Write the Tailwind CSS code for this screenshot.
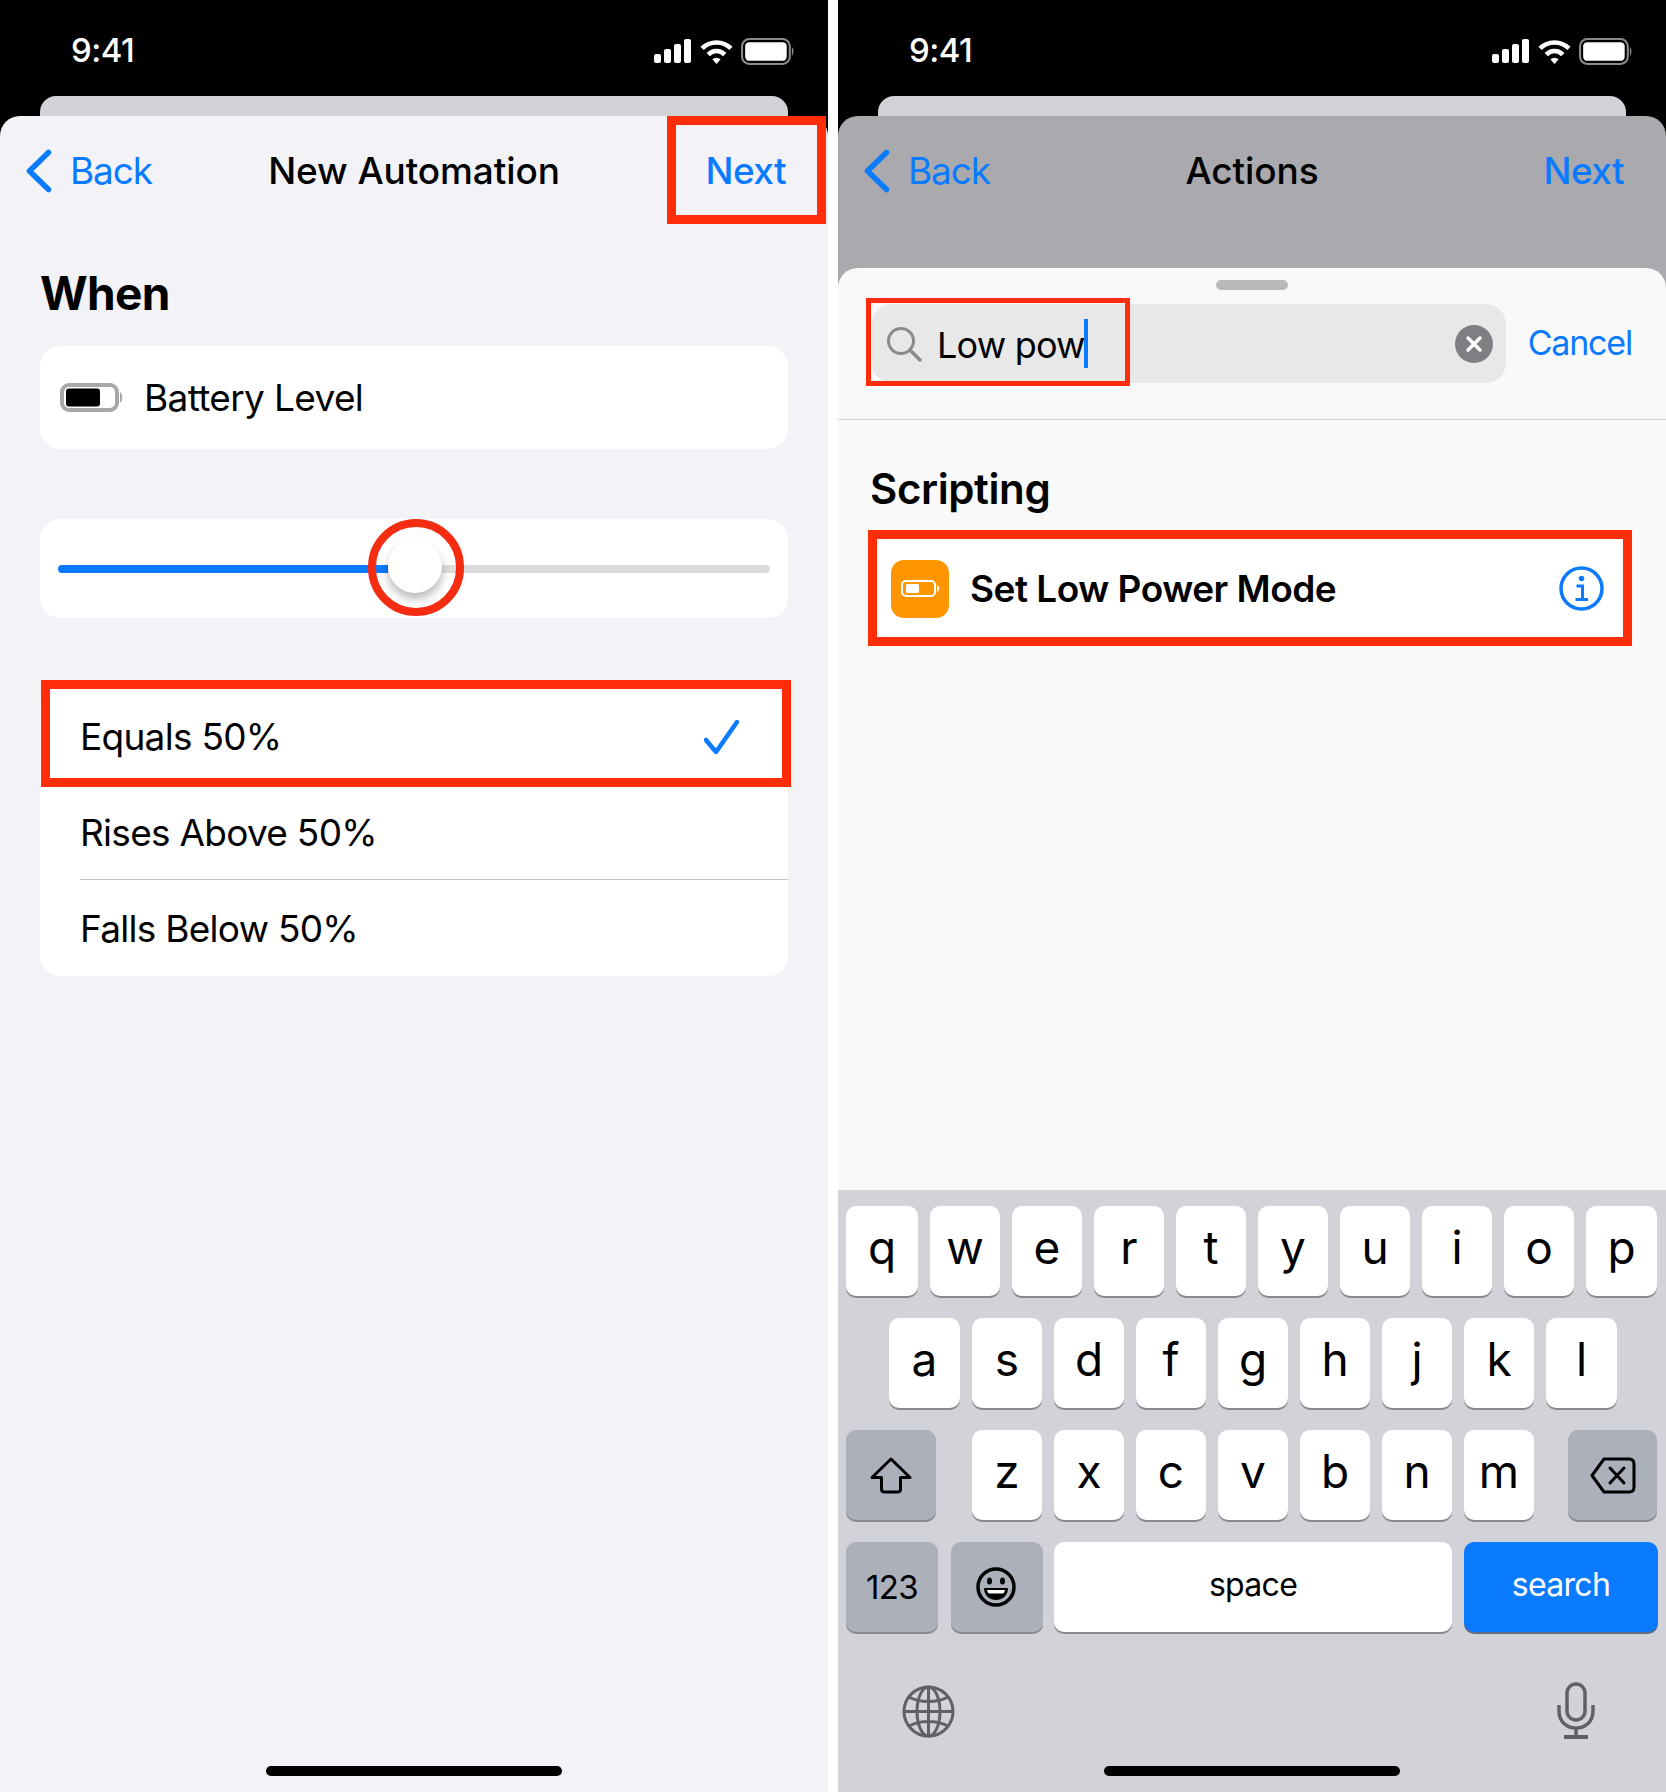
<!DOCTYPE html>
<html lang="en">
<head>
    <meta charset="UTF-8">
    <title>New Automation / Actions</title>
    <script src="https://cdn.jsdelivr.net/npm/@tailwindcss/browser@4"></script>
</head>
<body class="bg-white font-[Inter,sans-serif] text-black">

<!-- shared status bar icons -->
<svg class="hidden">
    <symbol id="signal" viewBox="0 0 38 24">
        <rect x="0" y="15" width="7" height="9" rx="2" fill="#fff"/>
        <rect x="10" y="10" width="7" height="14" rx="2" fill="#fff"/>
        <rect x="20" y="5" width="7" height="19" rx="2" fill="#fff"/>
        <rect x="30" y="0" width="7" height="24" rx="2" fill="#fff"/>
    </symbol>
    <symbol id="wifi" viewBox="0 0 32 24">
        <path d="M2 9 A20 20 0 0 1 30 9" fill="none" stroke="#fff" stroke-width="4.5"/>
        <path d="M8 15 A11 11 0 0 1 24 15" fill="none" stroke="#fff" stroke-width="4.5"/>
        <path d="M12 19.5 A6 6 0 0 1 20 19.5 L16 24 Z" fill="#fff"/>
    </symbol>
    <symbol id="battery" viewBox="0 0 52 26">
        <rect x="1" y="1" width="46" height="24" rx="7" fill="none" stroke="#8a8a8a" stroke-width="2"/>
        <rect x="4" y="4" width="40" height="18" rx="4" fill="#fff"/>
        <path d="M49 9 C51 10 51 16 49 17 Z" fill="#8a8a8a"/>
    </symbol>
    <symbol id="chevron" viewBox="0 0 26 44">
        <path d="M22.5 3.5 L3.5 22 L22.5 40.5" fill="none" stroke="#0a7aff" stroke-width="5.5" stroke-linecap="round" stroke-linejoin="round"/>
    </symbol>
</svg>

<div class="flex gap-[10px] h-[1792px] w-[1666px] overflow-hidden">

    <!-- left phone -->
    <section class="relative w-[828px] flex flex-col bg-black">
        <div class="h-[96px] flex items-center justify-between pl-[71px] pr-[33px] pt-[6px]">
            <span class="text-[33px] font-medium text-white tracking-[-0.5px]">9:41</span>
            <div class="flex items-center gap-[8px]">
                <svg class="w-[38px] h-[24px]"><use href="#signal"/></svg>
                <svg class="w-[33px] h-[25px]"><use href="#wifi"/></svg>
                <svg class="w-[54px] h-[27px]"><use href="#battery"/></svg>
            </div>
        </div>
        <div class="h-[20px] mx-[40px] rounded-t-[16px] bg-[#d1d1d6]"></div>

        <div class="flex-1 flex flex-col rounded-t-[20px] bg-[#f2f2f7]">
            <div class="h-[110px] grid grid-cols-[1fr_auto_1fr] items-center px-[34px]">
                <div class="-ml-[8px] flex items-center gap-[18px] text-[37px] text-[#0a7aff] tracking-[-1.1px]">
                    <svg class="w-[26px] h-[44px]"><use href="#chevron"/></svg>
                    <span>Back</span>
                </div>
                <h1 class="text-[37px] font-medium tracking-[-0.1px]">New Automation</h1>
                <span class="mr-[8px] justify-self-end text-[37px] font-medium text-[#0a7aff] tracking-[-0.6px]">Next</span>
            </div>

            <div class="px-[40px]">
                <h2 class="mt-[44px] mb-[30px] text-[46px] leading-[46px] font-bold tracking-[-0.7px]">When</h2>

                <div class="h-[103px] flex items-center gap-[21px] pl-[20px] rounded-[20px] bg-white text-[37px] tracking-[-0.65px]">
                    <svg class="w-[63px] h-[29px]" viewBox="0 0 63 29">
                        <rect x="2" y="2" width="55" height="25" rx="7" fill="none" stroke="#a8a8a8" stroke-width="4"/>
                        <rect x="6" y="5.5" width="34" height="18" rx="3" fill="#000"/>
                        <path d="M60 9 C63 11 63 18 60 20 Z" fill="#a8a8a8"/>
                    </svg>
                    <span>Battery Level</span>
                </div>

                <!-- slider -->
                <div class="relative h-[99px] mt-[70px] flex items-center px-[18px] rounded-[20px] bg-white">
                    <div class="w-[330px] h-[8px] rounded-l-full bg-[#0a7aff]"></div>
                    <div class="flex-1 h-[8px] rounded-r-full bg-[#dcdcdc]"></div>
                    <div class="absolute left-[348px] top-[20px] w-[54px] h-[54px] rounded-full bg-white shadow-[0_6px_10px_rgba(0,0,0,0.28)]"></div>
                    <div class="absolute left-[328px] top-0 w-[96px] h-[97px] rounded-full border-[8px] border-[#f42c12]"></div>
                </div>

                <!-- options -->
                <div class="relative mt-[70px] rounded-[20px] bg-white text-[37px] tracking-[-0.72px]">
                    <div class="h-[96px] pt-[2px] flex items-center justify-between pl-[40px] pr-[49px]">
                        <span>Equals 50%</span>
                        <svg class="w-[35px] h-[34px]" viewBox="0 0 35 34">
                            <path d="M2 20 L12 32 L33 2" fill="none" stroke="#0a7aff" stroke-width="4.5" stroke-linecap="round" stroke-linejoin="round"/>
                        </svg>
                    </div>
                    <div class="h-[96px] pt-[2px] flex items-center pl-[40px]">Rises Above 50%</div>
                    <div class="ml-[40px] -mt-[1px] mb-[1px] border-t border-[#c4c4c6]"></div>
                    <div class="h-[95px] flex items-center pl-[40px]">Falls Below 50%</div>
                    <div class="absolute -top-[8px] left-[1px] -right-[3px] h-[107px] border-[9px] border-[#ff2d0a]"></div>
                </div>
            </div>

            <div class="mt-auto mb-[16px] mx-auto w-[296px] h-[10px] rounded-full bg-black"></div>
        </div>

        <div class="absolute left-[667px] top-[116px] w-[159px] h-[108px] border-[9px] border-[#ff2d0a]"></div>
    </section>

    <!-- right phone -->
    <section class="relative w-[828px] flex flex-col bg-black">
        <div class="h-[96px] flex items-center justify-between pl-[71px] pr-[33px] pt-[6px]">
            <span class="text-[33px] font-medium text-white tracking-[-0.5px]">9:41</span>
            <div class="flex items-center gap-[8px]">
                <svg class="w-[38px] h-[24px]"><use href="#signal"/></svg>
                <svg class="w-[33px] h-[25px]"><use href="#wifi"/></svg>
                <svg class="w-[54px] h-[27px]"><use href="#battery"/></svg>
            </div>
        </div>
        <div class="h-[20px] mx-[40px] rounded-t-[16px] bg-[#d1d1d6]"></div>

        <div class="flex-1 flex flex-col rounded-t-[20px] bg-[#a9a9ae]">
            <div class="h-[110px] grid grid-cols-[1fr_auto_1fr] items-center px-[34px]">
                <div class="-ml-[8px] flex items-center gap-[18px] text-[37px] text-[#0a7aff] tracking-[-1.1px]">
                    <svg class="w-[26px] h-[44px]"><use href="#chevron"/></svg>
                    <span>Back</span>
                </div>
                <h1 class="text-[37px] font-medium tracking-[-0.1px]">Actions</h1>
                <span class="mr-[8px] justify-self-end text-[37px] font-medium text-[#0a7aff] tracking-[-0.6px]">Next</span>
            </div>

            <div class="mt-[42px] flex-1 flex flex-col rounded-t-[20px] overflow-hidden bg-[#f9f9f9]">
                <div class="mt-[12px] mx-auto w-[72px] h-[10px] rounded-full bg-[#b9b9bb]"></div>

                <div class="mt-[14px] flex items-center pl-[34px] pr-[34px] pb-[36px] border-b border-[#d4d4d6]">
                    <div class="flex-1 h-[79px] flex items-center pl-[14px] pr-[13px] rounded-[20px] bg-[#e8e8e9]">
                        <svg class="w-[36px] h-[36px]" viewBox="0 0 36 36">
                            <circle cx="15" cy="15" r="12.5" fill="none" stroke="#8b8b8f" stroke-width="3"/>
                            <path d="M24 24 L34 34" stroke="#8b8b8f" stroke-width="3.5" stroke-linecap="round"/>
                        </svg>
                        <span class="ml-[15px] pt-[2px] text-[36px] tracking-[-0.8px]">Low pow</span>
                        <span class="w-[4px] h-[49px] -ml-[1px] bg-[#0a7aff]"></span>
                        <svg class="ml-auto w-[38px] h-[38px]" viewBox="0 0 38 38">
                            <circle cx="19" cy="19" r="19" fill="#7f7f83"/>
                            <path d="M13 13 L25 25 M25 13 L13 25" stroke="#fff" stroke-width="3.5" stroke-linecap="round"/>
                        </svg>
                    </div>
                    <span class="ml-[22px] pb-[2px] text-[34px] text-[#0a7aff] tracking-[-1.2px]">Cancel</span>
                </div>

                <h2 class="mt-[46px] ml-[32px] text-[42px] leading-[46px] font-semibold tracking-[-0.4px]">Scripting</h2>

                <div class="relative mt-[18px] ml-[30px] mr-[34px] h-[116px] pt-[1px] flex items-center pl-[23px] pr-[28px] bg-white">
                    <div class="w-[58px] h-[58px] flex items-center justify-center rounded-[13px] bg-[#ff9500]">
                        <svg class="w-[39px] h-[17px]" viewBox="0 0 39 17">
                            <rect x="1" y="1" width="33" height="15" rx="4" fill="none" stroke="#fff" stroke-width="2"/>
                            <rect x="5" y="4" width="13" height="9" rx="1.5" fill="#fff"/>
                            <path d="M36 5 C39 6 39 11 36 12 Z" fill="#fff"/>
                        </svg>
                    </div>
                    <span class="ml-[21px] text-[37px] font-semibold tracking-[-0.5px]">Set Low Power Mode</span>
                    <svg class="ml-auto w-[45px] h-[45px]" viewBox="0 0 45 45">
                        <circle cx="22.5" cy="22.5" r="20.5" fill="none" stroke="#0a7aff" stroke-width="3.5"/>
                        <circle cx="22.5" cy="12.5" r="2.8" fill="#0a7aff"/>
                        <path d="M17.5 20 H23.5 V33 M16.5 33.5 H29" fill="none" stroke="#0a7aff" stroke-width="3"/>
                    </svg>
                    <div class="absolute inset-0 border-[9px] border-[#ff2d0a]"></div>
                </div>

                <!-- keyboard -->
                <div class="mt-auto h-[602px] flex flex-col bg-[#d1d3d9] text-[46px] leading-none">
                    <div class="mt-[16px] flex gap-[12px] pl-[8px]">
                        <div class="w-[72px] h-[90px] pb-[9px] flex items-center justify-center rounded-[10px] bg-white shadow-[0_2px_0_#898a8d]">q</div>
                        <div class="w-[70px] h-[90px] pb-[9px] flex items-center justify-center rounded-[10px] bg-white shadow-[0_2px_0_#898a8d]">w</div>
                        <div class="w-[70px] h-[90px] pb-[9px] flex items-center justify-center rounded-[10px] bg-white shadow-[0_2px_0_#898a8d]">e</div>
                        <div class="w-[70px] h-[90px] pb-[9px] flex items-center justify-center rounded-[10px] bg-white shadow-[0_2px_0_#898a8d]">r</div>
                        <div class="w-[70px] h-[90px] pb-[9px] flex items-center justify-center rounded-[10px] bg-white shadow-[0_2px_0_#898a8d]">t</div>
                        <div class="w-[70px] h-[90px] pb-[9px] flex items-center justify-center rounded-[10px] bg-white shadow-[0_2px_0_#898a8d]">y</div>
                        <div class="w-[70px] h-[90px] pb-[9px] flex items-center justify-center rounded-[10px] bg-white shadow-[0_2px_0_#898a8d]">u</div>
                        <div class="w-[70px] h-[90px] pb-[9px] flex items-center justify-center rounded-[10px] bg-white shadow-[0_2px_0_#898a8d]">i</div>
                        <div class="w-[70px] h-[90px] pb-[9px] flex items-center justify-center rounded-[10px] bg-white shadow-[0_2px_0_#898a8d]">o</div>
                        <div class="w-[71px] h-[90px] pb-[9px] flex items-center justify-center rounded-[10px] bg-white shadow-[0_2px_0_#898a8d]">p</div>
                    </div>
                    <div class="mt-[22px] flex gap-[12px] pl-[51px]">
                        <div class="w-[71px] h-[90px] pb-[9px] flex items-center justify-center rounded-[10px] bg-white shadow-[0_2px_0_#898a8d]">a</div>
                        <div class="w-[70px] h-[90px] pb-[9px] flex items-center justify-center rounded-[10px] bg-white shadow-[0_2px_0_#898a8d]">s</div>
                        <div class="w-[70px] h-[90px] pb-[9px] flex items-center justify-center rounded-[10px] bg-white shadow-[0_2px_0_#898a8d]">d</div>
                        <div class="w-[70px] h-[90px] pb-[9px] flex items-center justify-center rounded-[10px] bg-white shadow-[0_2px_0_#898a8d]">f</div>
                        <div class="w-[70px] h-[90px] pb-[9px] flex items-center justify-center rounded-[10px] bg-white shadow-[0_2px_0_#898a8d]">g</div>
                        <div class="w-[70px] h-[90px] pb-[9px] flex items-center justify-center rounded-[10px] bg-white shadow-[0_2px_0_#898a8d]">h</div>
                        <div class="w-[70px] h-[90px] pb-[9px] flex items-center justify-center rounded-[10px] bg-white shadow-[0_2px_0_#898a8d]">j</div>
                        <div class="w-[70px] h-[90px] pb-[9px] flex items-center justify-center rounded-[10px] bg-white shadow-[0_2px_0_#898a8d]">k</div>
                        <div class="w-[71px] h-[90px] pb-[9px] flex items-center justify-center rounded-[10px] bg-white shadow-[0_2px_0_#898a8d]">l</div>
                    </div>
                    <div class="mt-[22px] flex gap-[12px] pl-[8px]">
                        <div class="w-[90px] h-[90px] mr-[24px] flex items-center justify-center rounded-[10px] bg-[#abb0bb] shadow-[0_2px_0_#898a8d]">
                            <svg class="w-[42px] h-[37px]" viewBox="0 0 42 37">
                                <path d="M21 2 L40 20.5 H30.5 V32 Q30.5 35 27.5 35 H14.5 Q11.5 35 11.5 32 V20.5 H2 Z" fill="none" stroke="#000" stroke-width="3" stroke-linejoin="round"/>
                            </svg>
                        </div>
                        <div class="w-[70px] h-[90px] pb-[9px] flex items-center justify-center rounded-[10px] bg-white shadow-[0_2px_0_#898a8d]">z</div>
                        <div class="w-[70px] h-[90px] pb-[9px] flex items-center justify-center rounded-[10px] bg-white shadow-[0_2px_0_#898a8d]">x</div>
                        <div class="w-[70px] h-[90px] pb-[9px] flex items-center justify-center rounded-[10px] bg-white shadow-[0_2px_0_#898a8d]">c</div>
                        <div class="w-[70px] h-[90px] pb-[9px] flex items-center justify-center rounded-[10px] bg-white shadow-[0_2px_0_#898a8d]">v</div>
                        <div class="w-[70px] h-[90px] pb-[9px] flex items-center justify-center rounded-[10px] bg-white shadow-[0_2px_0_#898a8d]">b</div>
                        <div class="w-[70px] h-[90px] pb-[9px] flex items-center justify-center rounded-[10px] bg-white shadow-[0_2px_0_#898a8d]">n</div>
                        <div class="w-[70px] h-[90px] pb-[9px] flex items-center justify-center rounded-[10px] bg-white shadow-[0_2px_0_#898a8d]">m</div>
                        <div class="w-[89px] h-[90px] ml-[22px] flex items-center justify-center rounded-[10px] bg-[#abb0bb] shadow-[0_2px_0_#898a8d]">
                            <svg class="w-[46px] h-[37px]" viewBox="0 0 46 37">
                                <path d="M14 2 H39 Q44 2 44 7 V30 Q44 35 39 35 H14 L2 18.5 Z" fill="none" stroke="#000" stroke-width="3" stroke-linejoin="round"/>
                                <path d="M20 11 L34 26 M34 11 L20 26" stroke="#000" stroke-width="3" stroke-linecap="round"/>
                            </svg>
                        </div>
                    </div>
                    <div class="mt-[22px] flex pl-[8px] text-[32px] tracking-[-0.7px]">
                        <div class="w-[92px] h-[90px] text-[33px] flex items-center justify-center rounded-[10px] bg-[#abb0bb] shadow-[0_2px_0_#898a8d]">123</div>
                        <div class="w-[92px] h-[90px] ml-[13px] pr-[2px] flex items-center justify-center rounded-[10px] bg-[#abb0bb] shadow-[0_2px_0_#898a8d]">
                            <svg class="w-[40px] h-[40px]" viewBox="0 0 40 40">
                                <circle cx="20" cy="20" r="18" fill="none" stroke="#000" stroke-width="3.5"/>
                                <ellipse cx="13.5" cy="14" rx="2.5" ry="3.5" fill="#000"/>
                                <ellipse cx="26.5" cy="14" rx="2.5" ry="3.5" fill="#000"/>
                                <path d="M8 21 H32 C32 29 26 33 20 33 C14 33 8 29 8 21 Z" fill="#000"/>
                                <path d="M11 23 H29 C28.5 25 28 26 27 26.5 H13 C12 26 11.5 25 11 23 Z" fill="#fff"/>
                            </svg>
                        </div>
                        <div class="w-[398px] h-[90px] ml-[11px] pb-[4px] flex items-center justify-center rounded-[10px] bg-white shadow-[0_2px_0_#898a8d]">space</div>
                        <div class="w-[194px] h-[90px] ml-[12px] pb-[4px] flex items-center justify-center rounded-[10px] bg-[#0a7aff] text-white shadow-[0_2px_0_#5f6f88]">search</div>
                    </div>
                    <div class="mt-[50px] flex items-start justify-between pl-[64px] pr-[71px]">
                        <svg class="mt-[3px] w-[53px] h-[53px]" viewBox="0 0 53 53">
                            <g fill="none" stroke="#5f6165" stroke-width="3">
                                <circle cx="26.5" cy="26.5" r="24.5"/>
                                <ellipse cx="26.5" cy="26.5" rx="11.5" ry="24.5"/>
                                <path d="M26.5 2 V51 M2 26.5 H51 M7 12 C18 18 35 18 46 12 M7 41 C18 35 35 35 46 41"/>
                            </g>
                        </svg>
                        <svg class="w-[38px] h-[57px]" viewBox="0 0 38 57">
                            <g fill="none" stroke="#5f6165" stroke-width="3.5">
                                <rect x="10" y="2" width="18" height="36" rx="9"/>
                                <path d="M2 23 V29 C2 39 9 46 19 46 C29 46 36 39 36 29 V23 M19 46 V54"/>
                                <path d="M7 55 H31" stroke-width="4"/>
                            </g>
                        </svg>
                    </div>
                    <div class="mt-auto mb-[16px] mx-auto w-[296px] h-[10px] rounded-full bg-black"></div>
                </div>
            </div>
        </div>

        <div class="absolute left-[28px] top-[298px] w-[264px] h-[88px] border-[5px] border-[#ff2d0a]"></div>
    </section>
</div>

</body>
</html>
